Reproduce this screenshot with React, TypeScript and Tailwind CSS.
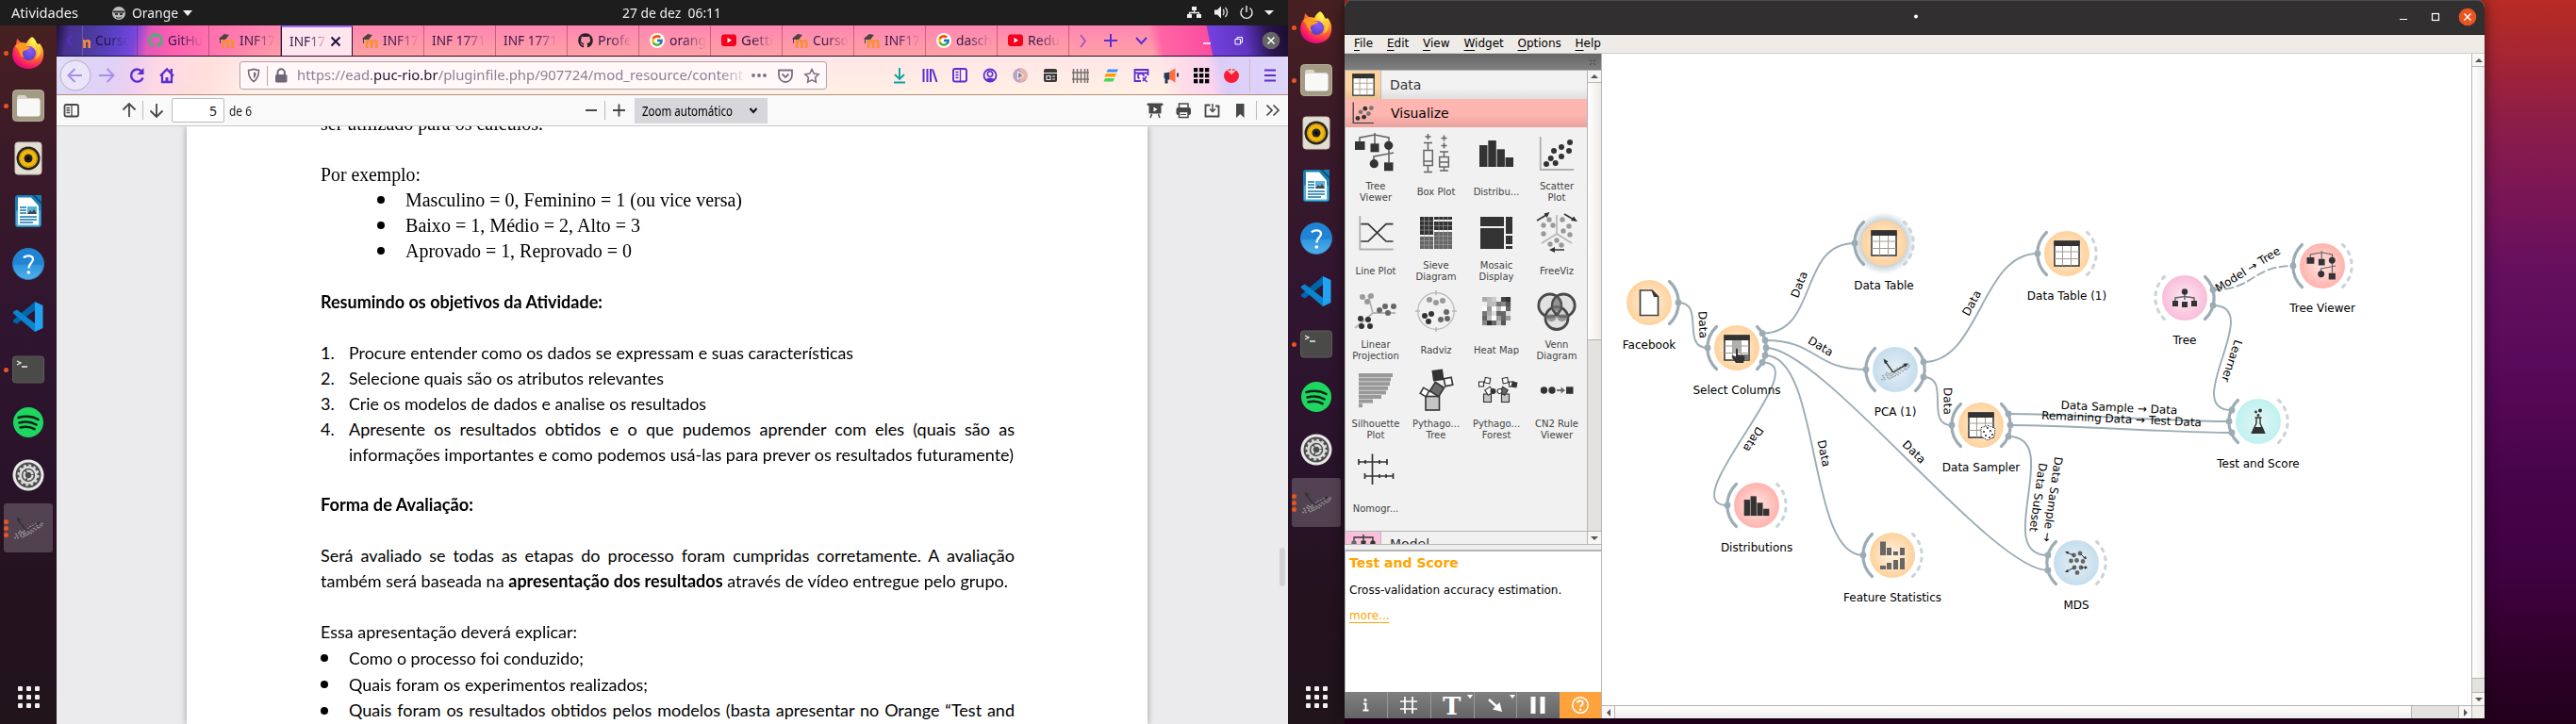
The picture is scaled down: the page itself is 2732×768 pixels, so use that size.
import React, { useLayoutEffect, useRef, useState } from "react";
import { FcGoogle } from "react-icons/fc";
import { FaGithub } from "react-icons/fa";

/* ---------- text helpers ---------- */

function Fit({ w, words, children, className = "" }: { w: number; words?: boolean; children: React.ReactNode; className?: string }) {
  const ref = useRef<HTMLSpanElement>(null);
  const [st, setSt] = useState<React.CSSProperties>({});
  useLayoutEffect(() => {
    const el = ref.current;
    if (!el) return;
    const nat = el.getBoundingClientRect().width;
    if (words) {
      const n = (el.textContent || "").split(" ").length - 1;
      setSt({ wordSpacing: `${(w - nat) / n}px` });
    } else setSt({ transform: `scaleX(${w / nat})` });
  }, []);
  return (
    <span className={"inline-block whitespace-nowrap " + className} style={{ width: w }}>
      <span ref={ref} className="inline-block origin-left whitespace-nowrap" style={st}>{children}</span>
    </span>
  );
}

/* ---------- dock ---------- */

const FirefoxIcon = () => (
  <svg width="36" height="36" viewBox="0 0 36 36">
    <defs>
      <radialGradient id="ffb" cx="0.75" cy="0.12" r="1">
        <stop offset="0.1" stopColor="#fff44f" /><stop offset="0.35" stopColor="#ffb02e" /><stop offset="0.6" stopColor="#ff5a36" /><stop offset="0.85" stopColor="#f5156c" /><stop offset="1" stopColor="#d0058a" />
      </radialGradient>
      <radialGradient id="ffg" cx="0.6" cy="0.3" r="0.8"><stop offset="0" stopColor="#9059ff" /><stop offset="1" stopColor="#4a3cc0" /></radialGradient>
    </defs>
    <path d="M22 1c3 2 4 4 5 7l2 1 1-1c3 4 5 8 4 14-1 8-8 13-16 13S2 30 1 21c0-5 1-9 4-12l1-6 4 4c2 0 4 0 6 1 1-3 3-5 6-7z" fill="url(#ffb)" />
    <circle cx="18.500" cy="18.500" r="7.500" fill="url(#ffg)" />
    <path d="M4 11c3-4 8-4 12-1-1 1 1 2 4 2-1 3-5 3-7 4-2 2-1 5 1 7-6-1-5-9-10-12z" fill="#ff9a1f" />
    <path d="M24 8c5 5 5 13 1 17 8-3 8-14-1-17z" fill="#ffcb3a" />
  </svg>
);
const FilesIcon = () => (
  <svg width="34" height="34" viewBox="0 0 34 34">
    <rect x="0.500" y="0.500" width="33" height="33" rx="4" fill="#a39b84" stroke="#b5ae9b" />
    <path d="M5 25V9c0-2 1-3 2-3h7l2 3h11c1.500 0 2.500 1 2.500 2v14c0 2-1 3-3 3H8c-2 0-3-1-3-3z" fill="#d9d6cc" />
    <rect x="5" y="10" width="24.500" height="18.500" rx="2.500" fill="#f8f8f6" />
  </svg>
);
const MusicIcon = () => (
  <svg width="34" height="36" viewBox="0 0 34 36">
    <rect x="3" y="1" width="28" height="34" rx="3" fill="#e3ded2" stroke="#cfc9bb" />
    <circle cx="17" cy="18" r="12.500" fill="#26241f" /><circle cx="17" cy="18" r="10" fill="#f2b90d" />
    <circle cx="17" cy="18" r="9" fill="none" stroke="#c9950c" /><circle cx="17" cy="18" r="4.500" fill="#222" /><circle cx="17" cy="18" r="1.500" fill="#000" />
  </svg>
);
const WriterIcon = () => (
  <svg width="34" height="36" viewBox="0 0 34 36">
    <rect x="3" y="1" width="28" height="34" rx="3" fill="#1781b5" />
    <rect x="4" y="17" width="26" height="17" rx="2" fill="#4aaed8" />
    <path d="M6 3.500h14l8 9v20H6z" fill="#fff" />
    <path d="M21 1h10v10z" fill="#0d4f77" /><path d="M24 1h7v7z" fill="#1781b5" />
    <path d="M8 14h7M8 17h7M8 20h7M8 24h18M8 27h18M8 30h14" stroke="#1477a8" strokeWidth="1.300" />
    <rect x="16" y="13" width="10" height="8" fill="#57b1dd" /><path d="M16 21l3-4 2 2 2-3 3 5z" fill="#444" />
  </svg>
);
const HelpIcon = () => (
  <svg width="34" height="34" viewBox="0 0 34 34">
    <defs><linearGradient id="hlp" x2="0" y2="1"><stop offset="0.5" stopColor="#1f84d6" /><stop offset="0.55" stopColor="#3296e0" /><stop offset="1" stopColor="#4fb0ea" /></linearGradient></defs>
    <circle cx="17" cy="17" r="16.500" fill="url(#hlp)" stroke="#2f7fc0" />
    <path d="M12 10.500c2-3 10-3 10 1.500 0 4-4.500 4-4.500 9.500" fill="none" stroke="#fff" strokeWidth="2.300" /><circle cx="17.300" cy="26" r="1.800" fill="#fff" />
  </svg>
);
const CodeIcon = () => (
  <svg width="34" height="34" viewBox="0 0 34 34">
    <path d="M24 1v9L5 24.500 1 22.500v-2z" fill="#0065a9" /><path d="M24 33v-9L5 9.500 1 11.500v2z" fill="#0a84cc" /><path d="M24 1l8.500 4v24L24 33z" fill="#22a3f2" />
  </svg>
);
const TermIcon = () => (
  <svg width="34" height="30" viewBox="0 0 34 30">
    <rect x="0.500" y="1" width="33" height="28" rx="3" fill="#4a4a48" stroke="#5c5c5a" />
    <path d="M5 6l4 2-4 2M10 12h6" fill="none" stroke="#eee" strokeWidth="1.300" />
  </svg>
);
const SpotifyIcon = () => (
  <svg width="34" height="34" viewBox="0 0 34 34">
    <circle cx="17" cy="17" r="16" fill="#1ed760" />
    <path d="M6.500 12c7-2 15-1.500 21 2M7.500 17.500c6-1.600 13-1 18 2M8.500 22.500c5-1.300 11-.8 15 1.700" fill="none" stroke="#12221a" strokeWidth="2.600" strokeLinecap="round" />
  </svg>
);
const GearIcon = () => (
  <svg width="34" height="34" viewBox="0 0 34 34">
    <circle cx="17" cy="17" r="16.500" fill="#e9e9e9" /><circle cx="17" cy="17" r="13.500" fill="#4c4c4c" />
    <circle cx="17" cy="17" r="10.500" fill="none" stroke="#ddd" strokeWidth="2.200" strokeDasharray="2.750 2.750" />
    <circle cx="17" cy="17" r="8.500" fill="none" stroke="#ddd" strokeWidth="2.600" />
    <circle cx="17" cy="17" r="4.500" fill="none" stroke="#ddd" strokeWidth="2.400" strokeDasharray="8 1.400" />
  </svg>
);
const CLOUD = [[-12, 8], [-10, 5], [-8, 8], [-7, 4], [-5, 6], [-4, 2], [-3, 5], [-1, 3], [0, 0], [1, 4], [3, 2], [4, -1], [5, 3], [6, 0], [8, 1], [9, -3], [10, -1], [12, -4], [14, -3], [-11, 10], [-6, 9], [-2, 7], [7, -3], [11, -6], [13, -6], [15, -5], [2, -2], [-9, 3], [-14, 10], [-13, 6], [-8, 6], [-5, 4], [-4, 8], [0, 6], [3, 5], [5, -3], [8, -5], [12, -1]];
const PcaGlyph = ({ cloud = "#8e979c" }: { cloud?: string }) => (
  <g>
    {CLOUD.map(([x, y], i) => <rect key={i} x={x - 0.7} y={y - 0.2} width="1.500" height="1.500" fill={cloud} />)}
    <path d="M-2 3L-11-9M-2 3L11-5" stroke="#333" strokeWidth="1.300" /><path d="M-12.500-11.500l5 3-3.600 2.600zM14-6.500l-5.500.300 2 3.700z" fill="#333" />
  </g>
);
const OrangeDockIcon = () => <svg width="34" height="34" viewBox="-17 -17 34 34"><PcaGlyph cloud="#a5a0a3" /></svg>;

const DOCK = [
  { I: FirefoxIcon, dots: 1 }, { I: FilesIcon, dots: 1 }, { I: MusicIcon, dots: 0 }, { I: WriterIcon, dots: 0 }, { I: HelpIcon, dots: 0 },
  { I: CodeIcon, dots: 0 }, { I: TermIcon, dots: 1 }, { I: SpotifyIcon, dots: 0 }, { I: GearIcon, dots: 0 }, { I: OrangeDockIcon, dots: 3 },
];

function Dock() {
  return (
    <div className="flex w-[60px] shrink-0 flex-col bg-[linear-gradient(#472021_0%,#3b1a28_18%,#301530_42%,#29132a_65%,#23121d_85%,#20141a_100%)] pt-[1px]">
      {DOCK.map(({ I, dots }, i) => (
        <div key={i} className="flex h-[56px] items-center">
          <div className="flex w-[6px] flex-col items-end gap-[2px]">
            {Array.from({ length: dots }, (_, k) => <div key={k} className="relative left-[3px] z-10 size-[5px] rounded-full bg-[#e95420]" />)}
          </div>
          <div className={"-ml-[2px] flex size-[52px] items-center justify-center rounded-[3px] " + (i === 9 ? "bg-white/20" : "")}><I /></div>
        </div>
      ))}
      <div className="mt-auto mb-[17px] grid w-[23px] grid-cols-3 gap-[4px] self-center">
        {Array.from({ length: 9 }, (_, k) => <div key={k} className="size-[5px] rounded-[1px] bg-[#efefef]" />)}
      </div>
    </div>
  );
}

/* ---------- browser ---------- */

const Moodle = () => (
  <svg width="17" height="17" viewBox="0 0 17 17">
    <text x="3" y="15.500" fontFamily="Noto Sans, sans-serif" fontWeight="800" fontSize="15" fill="#f7902f">m</text>
    <path d="M0 6l6-5 5 1-4 5-5 0z" fill="#4b4340" /><path d="M1.500 6v5" stroke="#4b4340" />
  </svg>
);
const Youtube = () => <svg width="16" height="16" viewBox="0 0 16 16"><rect y="1.500" width="16" height="12.500" rx="3" fill="#f5001d" /><path d="M6.500 5v5.500L11 7.800z" fill="#fff" /></svg>;
const Google = () => <div className="flex size-[16px] items-center justify-center rounded-full bg-white"><FcGoogle size={14} /></div>;

const TABS: { t: string; i: string; w: number; on?: boolean }[] = [
  { t: "GitHu", i: "gg", w: 37 }, { t: "INF17", i: "m", w: 38 }, { t: "INF17", i: "", w: 38, on: true }, { t: "INF17", i: "m", w: 38 }, { t: "INF 1771", i: "", w: 57 }, { t: "INF 1771", i: "", w: 57 },
  { t: "Profe", i: "gh", w: 36 }, { t: "orang", i: "g", w: 39 }, { t: "Getti", i: "y", w: 34 }, { t: "Curso", i: "m", w: 38 }, { t: "INF17", i: "m", w: 38 }, { t: "dasch", i: "g", w: 38 }, { t: "Redu", i: "y", w: 34 },
];
const tabIcon = (i: string) =>
  i === "m" ? <Moodle /> : i === "g" ? <Google /> : i === "y" ? <Youtube /> : i === "gh" ? <FaGithub size={16} color="#24222c" /> : <FaGithub size={16} color="#4fae7d" />;

function Tabs() {
  return (
    <div className="flex h-[33px] items-stretch border-b border-[#1d1038] bg-[linear-gradient(101deg,#1d1038_0px,#4a3192_14px,#4a3a9c_36px,#5f41cc_66px,#7a46dc_84px,#e455b8_98px,#ff5fae_125px,#ff70ae_160px,transparent_240px),linear-gradient(78deg,transparent_1138px,#ff66a5_1149px,#fb4d9f_1199px,#7440dd_1200px,#5f35c4_1236px,#4d2ba0_1244px,#2b1450_1262px,#1d0f33_1280px),linear-gradient(#ff86b2,#ffa1a4)] font-['Noto_Sans',sans-serif] text-[14.500px] text-[#3b1a4a]">
      <div className="flex w-[28px] items-center justify-center border-r border-[#6d58b0]"><svg width="8" height="12" viewBox="0 0 8 12"><path d="M6 1L2 6l4 5" fill="none" stroke="#5a2fd0" strokeWidth="1.800" /></svg></div>
      <div className="flex w-[58px] items-center border-r border-black/20 text-[#1f1140]">
        <div className="mr-[5px] flex w-[8px] shrink-0 justify-end overflow-hidden"><div className="w-[17px] shrink-0"><Moodle /></div></div>
        <span className="whitespace-nowrap [mask-image:linear-gradient(to_right,#000_30%,transparent_95%)]"><Fit w={38}>Curso</Fit></span>
      </div>
      {TABS.map((t, k) => (
        <div key={k} className={"flex w-[76px] shrink-0 items-center " + (t.on ? "border-x border-[#1d1038] border-t-[2px] border-t-[#a26bff] bg-[#ffe6ee]" : "border-r border-[#6b2448]/40")}>
          {t.i ? <div className="ml-[10px] mr-[5px] flex w-[17px] shrink-0 justify-center">{tabIcon(t.i)}</div> : <div className="w-[8px] shrink-0" />}
          <span className={"whitespace-nowrap " + (t.on ? "[mask-image:linear-gradient(to_right,#000_50%,rgba(0,0,0,0.15))]" : t.i ? "[mask-image:linear-gradient(to_right,#000_35%,transparent)]" : "[mask-image:linear-gradient(to_right,#000_60%,transparent)]")}><Fit w={t.w}>{t.t}</Fit></span>
          {t.on && <svg width="19" height="12" viewBox="-5 0 19 12"><path d="M1.500 1.500l9 9M10.500 1.500l-9 9" stroke="#1f1140" strokeWidth="2" /></svg>}
        </div>
      ))}
      <div className="flex items-center">
        <svg width="232" height="32" viewBox="1134 28 232 32" fill="none">
          <path d="M1146 38l5 6.500-5 6.500" stroke="#a54fc4" strokeWidth="1.800" />
          <path d="M1171 44h14M1178 37v14M1205 41l5.500 6 5.500-6" stroke="#5a2fd0" strokeWidth="2" />
          <path d="M1276 47h8" stroke="#fff" strokeWidth="1.500" />
          <path d="M1310 42.500h5.500v5.500h-5.500zM1312 42.500v-2h5.500v5.500h-2" stroke="#fff" />
          <circle cx="1348" cy="44" r="9.300" fill="#666" /><path d="M1344.500 40.500l7 7M1351.500 40.500l-7 7" stroke="#fff" strokeWidth="1.500" />
        </svg>
      </div>
    </div>
  );
}

function NavBar() {
  return (
    <div className="flex h-[41px] items-center border-b border-[#b58d78] bg-[linear-gradient(104deg,#e3dff8_0px,#dcd6f8_20px,#e0d2f6_60px,#f0cfee_85px,#ffd9e4_110px,#ffdfdc_160px,transparent_200px),linear-gradient(76deg,transparent_1142px,#ffdde8_1160px,#fbd3ee_1192px,#dccdf8_1205px,#dfd6fa_1275px),linear-gradient(#ffe6e8,#fff0e4)]">
      <svg width="194" height="40" viewBox="60 60 194 40" fill="none">
        <circle cx="80" cy="80" r="16" fill="#efe9fa" fillOpacity="0.800" stroke="#b6aec6" />
        <path d="M87 80H73M79.500 73l-7 7 7 7" stroke="#a78ee6" strokeWidth="2" />
        <path d="M105 80h15M113.500 73l7 7-7 7" stroke="#a78ee6" strokeWidth="2" />
        <path d="M151 76.500a6.500 6.500 0 1 0 .6 6" stroke="#5a2fd0" strokeWidth="2.400" /><path d="M152.500 72v7h-7z" fill="#5a2fd0" />
        <path d="M170 80.500l7-7 7 7M172 79v8h10v-8" stroke="#5a2fd0" strokeWidth="2.300" /><path d="M175.500 82h3v5h-3z" fill="#5a2fd0" /><path d="M180.500 73h2.500v4h-2.500z" fill="#5a2fd0" />
      </svg>
      <div className="flex h-[30px] w-[623px] items-center rounded-[3px] border border-[#b0a0b2] bg-[#fffafa]/90">
        <svg width="60" height="28" viewBox="255 66 60 28" fill="none">
          <path d="M263.500 74.500c2.500 0 4-.5 5.500-1.200 1.500.7 3 1.200 5.500 1.200 0 6-1.500 9.500-5.500 12-4-2.500-5.500-6-5.500-12z" stroke="#6f6678" strokeWidth="1.500" /><path d="M269 76.500v7c1.800-1.500 2.500-3.500 2.500-6.200z" fill="#6f6678" />
          <path d="M283.500 70v21" stroke="#b5a9b6" />
          <rect x="292" y="79" width="12.500" height="8.500" rx="1.500" fill="#6f6678" /><path d="M294.500 80v-3a3.700 3.700 0 0 1 7.400 0v3" stroke="#6f6678" strokeWidth="2" />
        </svg>
        <div className="h-[24px] w-[478px] font-['Noto_Sans',sans-serif] text-[15px] leading-[23px] text-[#8b8094] [mask-image:linear-gradient(to_right,#000_94%,transparent)]">
          <Fit w={473}>https://ead.<span className="text-[#1f1030]">puc-rio.br</span>/pluginfile.php/907724/mod_resource/content</Fit>
        </div>
        <svg width="80" height="28" viewBox="794 66 80 28" fill="none">
          <circle cx="800" cy="80" r="1.900" fill="#7a6f85" /><circle cx="806" cy="80" r="1.900" fill="#7a6f85" /><circle cx="812" cy="80" r="1.900" fill="#7a6f85" />
          <path d="M827 74.500h14v5c0 4-3 7.500-7 7.500s-7-3.500-7-7.500z" stroke="#7a6f85" strokeWidth="1.800" /><path d="M830.500 78.500l3.500 3.500 3.500-3.500" stroke="#7a6f85" strokeWidth="1.800" />
          <path d="M862 73.500l2.200 4.500 4.900.7-3.500 3.500.8 4.900-4.400-2.300-4.400 2.300.8-4.900-3.500-3.500 4.900-.7z" stroke="#7a6f85" strokeWidth="1.600" />
        </svg>
      </div>
      <svg width="489" height="40" viewBox="877 60 489 40" fill="none">
        <path d="M954 72v12M949 79l5 5 5-5M948 87.500h12" stroke="#0ba3a6" strokeWidth="1.900" />
        <path d="M979.500 73v14M983.500 73v14M987 73v14M989 73.500l4.500 13.500" stroke="#5a2fd0" strokeWidth="2" />
        <rect x="1011" y="73" width="14" height="13.500" rx="2" stroke="#5a2fd0" strokeWidth="1.900" /><path d="M1018.500 73v13M1013.500 76.500h3M1013.500 79.500h3M1013.500 82.500h3" stroke="#5a2fd0" strokeWidth="1.300" />
        <circle cx="1050" cy="80" r="6.500" stroke="#5a2fd0" strokeWidth="1.800" /><circle cx="1050" cy="78.500" r="2.700" stroke="#5a2fd0" strokeWidth="1.600" /><path d="M1045.500 84c3-2 6-2 9 0l-2 2.500h-5z" fill="#5a2fd0" />
        <circle cx="1082" cy="80" r="7.800" fill="#b9a3c0" /><path d="M1082 72.200a7.800 7.800 0 0 1 7 11l-7 4.600z" fill="#e9b7a9" /><path d="M1079.500 76v8l6-4z" fill="#8b7a98" stroke="#fff" />
        <rect x="1107" y="73" width="14" height="14" rx="2" fill="#3a3638" /><path d="M1107 77.500h14M1110 80.500h4v4h-4zM1116 81h3M1116 84h3" stroke="#eee" strokeWidth="1.100" />
        <path d="M1138.500 73v15M1142.500 73v15M1146.500 73v15M1150.500 73v15M1153.500 73v15M1137 77h18M1137 84h18" stroke="#77716f" strokeWidth="1.500" />
        <path d="M1175 73.500h11l-1.500 3h-11z" fill="#3f8cff" /><path d="M1173 78h11l-1.500 3.500h-11z" fill="#ff9a00" /><path d="M1172 83h10l-1.500 3.500h-10z" fill="#48d65c" />
        <path d="M1210 86h-6.500V74h14v6M1203.500 77.500h14" stroke="#5a2fd0" strokeWidth="1.800" /><path d="M1208.500 83.500a3 3 0 1 1 4.500-2.500M1212 82.500l4.500 4.500M1212 86l4-5" stroke="#5a2fd0" strokeWidth="1.700" />
        <path d="M1234.500 77.500l6-1v8h-2v4h-3v-5l-1-1z" fill="#243b55" /><path d="M1240.500 76l6-3.500v15l-6-3.500z" fill="#ff6b3d" /><path d="M1248 77.500h2v4h-2z" fill="#243b55" />
        {[0, 1, 2].map((r) => [0, 1, 2].map((c) => <rect key={`${r}${c}`} x={1266 + c * 6} y={72 + r * 6} width="4.300" height="4.300" fill="#000" />))}
        <ellipse cx="1306" cy="80.500" rx="8" ry="7.500" fill="#f81d36" /><path d="M1301 74l4 1 1-3 1.500 3 4-1-3 3-2.500 2-2-2z" fill="#ffc9c0" />
        <path d="M1325.500 63v34" stroke="#c9b9c9" />
        <path d="M1341 74.500h12M1341 80h12M1341 85.500h12" stroke="#5a2fd0" strokeWidth="2" />
      </svg>
    </div>
  );
}

function PdfBar() {
  return (
    <div className="flex h-[33px] items-center border-b border-[#c8c8c8] bg-[#f9f9fa] font-['Noto_Sans',sans-serif] text-[14px] text-[#1b1b1b]">
      <svg width="122" height="32" viewBox="60 101 122 32" fill="none" stroke="#484848">
        <rect x="68.500" y="111" width="14.500" height="12.500" rx="2" strokeWidth="1.800" /><path d="M76 111v12M70.500 114.500h3.500M70.500 117h3.500M70.500 119.500h3.500" strokeWidth="1.300" />
        <path d="M137 124v-14M130.500 116.500l6.500-6.500 6.500 6.500" strokeWidth="1.800" /><path d="M151.500 107v20" stroke="#bbb" /><path d="M166 110v14M159.500 117.500l6.500 6.500 6.500-6.500" strokeWidth="1.800" />
      </svg>
      <div className="flex h-[26px] w-[56px] items-center justify-end rounded-[2px] border border-[#bbb] bg-white pr-[7px]">5</div>
      <div className="ml-[5px] w-[364px]"><Fit w={24}>de 6</Fit></div>
      <svg width="66" height="32" viewBox="607 101 66 32" fill="none" stroke="#484848"><path d="M621 117h12M650 117h13M656.500 110.500v13" strokeWidth="1.900" /><path d="M641.500 107v20" stroke="#bbb" /></svg>
      <div className="flex h-[27px] w-[141px] items-center bg-[#d7d7db] pl-[8px]">
        <Fit w={96} className="text-black">Zoom automático</Fit>
        <svg className="ml-[17px]" width="10" height="8" viewBox="0 0 10 8"><path d="M1.500 2L5 6l3.500-4" fill="none" stroke="#111" strokeWidth="2" /></svg>
      </div>
      <svg className="ml-auto" width="160" height="32" viewBox="1206 101 160 32" fill="none" stroke="#484848">
        <path d="M1217 110h16v1.500h-16zM1219 112h12v8h-12z" fill="#484848" strokeWidth="1" /><path d="M1223.500 113.500v5l4-2.500z" fill="#fff" stroke="none" /><path d="M1221.500 121l-1.500 4M1228.500 121l1.500 4" strokeWidth="1.500" />
        <path d="M1250.500 114v-4h9.500v4" strokeWidth="1.500" /><rect x="1247.500" y="114" width="15.500" height="8" rx="2" fill="#484848" stroke="none" /><path d="M1250.500 118.500h9.500v6h-9.500z" fill="#fff" strokeWidth="1.500" /><path d="M1252 121.500h6" />
        <path d="M1289 112.500h3.500v11h-14v-12h5" strokeWidth="1.800" /><path d="M1286 110v8M1283 115.500l3 3 3-3" strokeWidth="1.500" />
        <path d="M1311 110h8.500v15l-4.200-4-4.300 4z" fill="#484848" stroke="none" />
        <path d="M1332.500 107v20" stroke="#bbb" /><path d="M1343.500 111.500l5.500 5.500-5.500 5.500M1350.500 111.500l5.500 5.500-5.500 5.500" strokeWidth="1.700" />
      </svg>
    </div>
  );
}

const Line = ({ children, cls = "" }: { children?: React.ReactNode; cls?: string }) => <div className={"flex h-[26.900px] shrink-0 items-center whitespace-nowrap " + cls}>{children}</div>;
const Bullet = ({ cls }: { cls: string }) => <div className={"flex items-center " + cls}><div className="size-[8px] rounded-full bg-black" /></div>;

function PdfPage() {
  const ser = "pb-[2px] font-['Liberation_Serif',serif] text-[20px]";
  return (
    <div className="relative flex flex-1 overflow-hidden bg-[#ebebed]">
      <div className="ml-[138px] w-[1019px] overflow-hidden bg-white pl-[142px] font-['Lato',sans-serif] text-[18px] text-black shadow-[0_0_7px_rgba(0,0,0,0.35)]">
        <div className="-mt-[15px] flex flex-col">
          <Line cls={ser}><Fit w={236}>ser utilizado para os cálculos.</Fit></Line>
          <Line />
          <Line cls={ser}><Fit w={106}>Por exemplo:</Fit></Line>
          <Line cls={ser}><Bullet cls="ml-[60px] w-[30px]" /><Fit w={357}>Masculino = 0, Feminino = 1 (ou vice versa)</Fit></Line>
          <Line cls={ser}><Bullet cls="ml-[60px] w-[30px]" /><Fit w={249}>Baixo = 1, Médio = 2, Alto = 3</Fit></Line>
          <Line cls={ser}><Bullet cls="ml-[60px] w-[30px]" /><Fit w={240}>Aprovado = 1, Reprovado = 0</Fit></Line>
          <Line />
          <Line cls="font-bold"><Fit w={299}>Resumindo os objetivos da Atividade:</Fit></Line>
          <Line />
          <Line><span className="w-[30px]">1.</span><Fit w={535}>Procure entender como os dados se expressam e suas características</Fit></Line>
          <Line><span className="w-[30px]">2.</span><Fit w={334}>Selecione quais são os atributos relevantes</Fit></Line>
          <Line><span className="w-[30px]">3.</span><Fit w={379}>Crie os modelos de dados e analise os resultados</Fit></Line>
          <Line><span className="w-[30px]">4.</span><Fit w={706} words>Apresente os resultados obtidos e o que pudemos aprender com eles (quais são as</Fit></Line>
          <Line><span className="w-[30px]" /><Fit w={705}>informações importantes e como podemos usá-las para prever os resultados futuramente)</Fit></Line>
          <Line />
          <Line cls="font-bold"><Fit w={162}>Forma de Avaliação:</Fit></Line>
          <Line />
          <Line><Fit w={736} words>Será avaliado se todas as etapas do processo foram cumpridas corretamente. A avaliação</Fit></Line>
          <Line><Fit w={729}>também será baseada na <b>apresentação dos resultados</b> através de vídeo entregue pelo grupo.</Fit></Line>
          <Line />
          <Line><Fit w={272}>Essa apresentação deverá explicar:</Fit></Line>
          <Line cls="mt-[1px]"><Bullet cls="w-[30px]" /><Fit w={249}>Como o processo foi conduzido;</Fit></Line>
          <Line cls="mt-[1px]"><Bullet cls="w-[30px]" /><Fit w={317}>Quais foram os experimentos realizados;</Fit></Line>
          <Line cls="mt-[1px]"><Bullet cls="w-[30px]" /><Fit w={706} words>Quais foram os resultados obtidos pelos modelos (basta apresentar no Orange “Test and</Fit></Line>
        </div>
      </div>
      <div className="ml-auto mr-[3px] mt-[447px] h-[41px] w-[6px] rounded-[3px] bg-[#d3d3d5]" />
    </div>
  );
}

function TopBar() {
  return (
    <div className="flex h-[27px] shrink-0 items-center bg-[#1d1d1d] font-['Noto_Sans',sans-serif] text-[15px] text-[#efefef]">
      <div className="w-[119px] pl-[12px]"><Fit w={71}>Atividades</Fit></div>
      <svg width="21" height="16" viewBox="0 0 21 16"><circle cx="7" cy="8" r="7" fill="#bdbdbd" /><path d="M1 6.500h12M3 9h3M8 9h3" stroke="#333" strokeWidth="1.800" /><path d="M4 12c2 1.500 4 1.500 6 0" fill="none" stroke="#333" /></svg>
      <Fit w={49}>Orange</Fit>
      <svg className="ml-[5px]" width="10" height="8" viewBox="0 0 10 8"><path d="M0 1h10L5 7z" fill="#efefef" /></svg>
      <div className="ml-[456px] whitespace-pre"><Fit w={105} className="whitespace-pre"><span className="whitespace-pre">27 de dez  06:11</span></Fit></div>
      <svg className="ml-auto" width="110" height="27" viewBox="1256 0 110 27" fill="none">
        <path d="M1264 7h5v4h-5zM1259 15h5v4h-5zM1269 15h5v4h-5z" fill="#efefef" /><path d="M1266.500 11v3M1261.500 15v-1.500h10V15" stroke="#efefef" strokeWidth="1.300" />
        <path d="M1288 10.500h3l4-4v13l-4-4h-3z" fill="#efefef" /><path d="M1297 10c1.500 2 1.500 4 0 6M1299.500 8c2.500 3 2.500 7 0 10" stroke="#ddd" strokeWidth="1.300" />
        <path d="M1318.500 8.500a6 6 0 1 0 7 0M1322 6v7" stroke="#efefef" strokeWidth="1.400" />
        <path d="M1341 11h10l-5 5z" fill="#efefef" />
      </svg>
    </div>
  );
}

/* ---------- widget glyphs ---------- */

const dk = "#333", md = "#666", lt = "#999";
const Dots = ({ p, f = dk, r = 3 }: { p: number[][]; f?: string; r?: number }) => <>{p.map(([x, y], i) => <circle key={i} cx={x} cy={y} r={r} fill={f} />)}</>;

const TreeViewerGlyph = () => (
  <g>
    <path d="M-1-21v12M-17-12v-4L-1-19l15 3v4M14-4v14M-2 8v-4l16-3 5-1" fill="none" stroke={md} strokeWidth="1.600" />
    <rect x="-22" y="-12" width="10.500" height="9" fill={dk} /><rect x="-5.500" y="-9.700" width="9" height="9" fill={dk} /><rect x="9" y="10.300" width="9.500" height="9" fill={dk} />
    <Dots p={[[13.700, -7.700], [-1.700, 11.700]]} r={4.600} />
  </g>
);
const BoxPlotGlyph = () => (
  <g fill="none" stroke={md} strokeWidth="1.500">
    <path d="M-8.500-10.500v8M-8.500 14v6.500M-13-10.500h9M-13 20.500h9M-13 9h9M-8.500-20v6M-11.500-17h6" /><rect x="-13" y="-2.500" width="9.300" height="16" />
    <path d="M8.500-1v6M8.500 15v4M4-1h9M4 19h9M4 10h9M8.500-18.500v6M5.500-15.500h6M8.500-10.500v6M5.500-7.500h6" /><rect x="3.700" y="4.500" width="9.600" height="10.500" />
  </g>
);
const DistGlyph = () => <g fill={dk}><rect x="-18" y="-8" width="8.500" height="23" /><rect x="-8.700" y="-13" width="8.500" height="28" /><rect x="0.600" y="-3.700" width="8.300" height="18.700" /><rect x="9.600" y="5" width="8.400" height="10" /></g>;
const ScatterGlyph = () => <g><path d="M-17.300-17v35H18" fill="none" stroke="#b0b0b0" strokeWidth="1.800" /><Dots p={[[-11, 12], [-6.300, 6], [-1.300, 11], [-3, -2], [5, -6], [5, 4], [14, -11], [13, -2]]} /></g>;
const LineGlyph = () => <g fill="none"><path d="M-16.700-17v35.500H18.700" stroke="#b0b0b0" strokeWidth="1.800" /><path d="M-15.700-8.300H-8L11 10h7.500M-15.700 10H-8L11-8.300h7.500" stroke={dk} strokeWidth="1.700" /></g>;
const SieveGlyph = () => (
  <g>
    <path d="M-17-16h14v19h-14zM-2-16h19v3h-19zM-2-11h19v9h-19z" fill={dk} /><path d="M-17 5h14v13h-14zM-2 0h19v18h-19z" fill={md} />
    <path d="M-12.500-16v34M-7.700-16v34M3-16v34M7.700-16v34M12.400-16v34M-17-11.500h14M-17-6.800h14M-17-2h14M-17 9.500h14M-17 14h14M-2-6.500h19M-2 4.500h19M-2 9h19M-2 13.500h19" stroke="#aaa" strokeWidth="0.600" />
  </g>
);
const MosaicGlyph = () => <path d="M-17-16H8v10h-25zM-17-4H8v22h-25zM10-16h7V2h-7zM10 4h7v9h-7zM10 15h7v3h-7z" fill={dk} />;
const FreeVizGlyph = () => (
  <g>
    <path d="M0-18V2L-16 12M0 2l16 10" fill="none" stroke="#b5b5b5" strokeWidth="1.600" />
    <Dots f={lt} r={2.700} p={[[-8, -13], [-14, -7], [-4, -7], [-14, 2], [-7, 13], [6, -13], [13, -6], [7, -1], [14, 3], [0, 9], [5, 14]]} />
    <path d="M-21-12l10-6M8-19l10 6M8 19H-4" stroke={dk} strokeWidth="1.600" /><path d="M-7.500-21l-3 6-3-4.500zM22-11l-7-1 3-4.500zM-8 19l6-3v6z" fill={dk} />
  </g>
);
const LinProjGlyph = () => (
  <g>
    <path d="M-3 2L-8-17M-3 2h24M-3 2l-19 16" stroke="#b5b5b5" strokeWidth="1.800" />
    <Dots f={lt} p={[[-14, -15], [-5, -16], [-9, -10]]} /><Dots f={md} p={[[4, -1], [10, -5], [19, -5], [13, 2]]} /><Dots p={[[-16, 8], [-8, 9], [-15, 16], [-6, 16]]} />
  </g>
);
const RadvizGlyph = () => (
  <g>
    <circle r="19.300" fill="none" stroke="#b5b5b5" strokeWidth="1.200" /><path d="M0-22v5M0 17v5M-22 0h5M17 0h5" stroke="#b5b5b5" strokeWidth="1.500" />
    <Dots f={lt} p={[[-7, -12], [0, -9], [7, -11]]} /><Dots p={[[-12, 5], [-5, 3], [-8, 11]]} /><Dots f={md} p={[[11, 1], [5, 9], [12, 8]]} />
  </g>
);
const HEAT = ["abce43", "ebb785", "f9fbf6", "7ad66d", "6bf969", "836b5e"];
const HeatGlyph = () => <g>{HEAT.map((row, r) => row.split("").map((c, k) => <rect key={`${r}${k}`} x={-15 + k * 5} y={-15 + r * 5} width="5.100" height="5.100" fill={`#${c}${c}${c}`} />))}</g>;
const VennGlyph = () => <g stroke="#4a4a4a" strokeWidth="2.800" fill="#777" fillOpacity="0.120"><circle cx="-7.200" cy="-6" r="12" /><circle cx="7.200" cy="-6" r="12" /><circle cx="0" cy="7.500" r="12" /><path d="M0-15c4 4 5 8 4 13-2 3-6 3-8 0-1-5 0-9 4-13zM-12 5c5-3 9-2 12 1-1 4-3 5-7 5-3-1-4-3-5-6zM12 5c-5-3-9-2-12 1 1 4 3 5 7 5 3-1 4-3 5-6z" stroke="none" fill="#777" fillOpacity="0.700" /></g>;
const SilGlyph = () => <g>{[36, 34, 33, 31, 29, 24, 15, 4].map((w, i) => <rect key={i} x="-18" y={-18 + i * 4.600} width={w} height="4" fill={lt} />)}</g>;
const PyTreeGlyph = () => (
  <g stroke={dk} strokeWidth="1.600">
    <rect x="-11" y="6.500" width="14.500" height="14.500" fill="#c4c4c4" /><rect x="-5.500" y="-5.500" width="11" height="11" fill="#6b6b6b" transform="translate(1 -1) rotate(32)" />
    <rect x="-3.500" y="-3.500" width="7" height="7" fill="#fff" transform="translate(-12 2) rotate(30)" /><rect x="-5" y="-5" width="10" height="10" fill={dk} transform="translate(2 -16) rotate(-8)" /><rect x="-4" y="-4" width="8" height="8" fill="#fff" transform="translate(13 -9) rotate(-12)" />
  </g>
);
const Mini = ({ c1, c2 }: { c1: string; c2: string }) => (
  <g stroke={dk} strokeWidth="1.100"><rect x="-4" y="4" width="8" height="8.500" fill="#c4c4c4" /><rect x="-3" y="-3" width="6.500" height="6.500" fill={c1} transform="rotate(-33 2 -2)" /><rect x="-9" y="-9" width="5" height="5" fill="#fff" /><rect x="-4.500" y="-13" width="5.500" height="5.500" fill="#fff" transform="rotate(10)" /><circle cx="6" cy="1" r="2.500" fill={c2} /></g>
);
const PyForestGlyph = () => <g><g transform="translate(-9.500 0)"><Mini c1="#fff" c2="#333" /></g><g transform="translate(9.500 0) scale(-1 1)"><Mini c1="#666" c2="#fff" /></g><rect x="16" y="-9" width="6" height="6" fill={dk} transform="rotate(12 19 -6)" /></g>;
const Cn2Glyph = () => <g><Dots p={[[-13.500, 0], [-5, 0]]} r={3.700} /><path d="M0 0h6" stroke={md} strokeWidth="1.800" /><path d="M4.500-3.500L9 0 4.500 3.500z" fill={md} /><rect x="10" y="-3.700" width="7.500" height="7.500" fill={dk} /></g>;
const NomoGlyph = () => <path d="M-3.500-16.500V16M-18-8h30M-11.500 7h30M-18-11v6M12-11v6M-11-10v4M4-10v4M-11.500 4v6M18.500 4v6M4 5v4M11 5v4" fill="none" stroke={dk} strokeWidth="1.700" />;

const TableGlyph = () => (
  <g><rect x="-13" y="-13" width="26" height="26" fill="#fff" stroke={dk} strokeWidth="1.500" /><path d="M-13-2h26M-13 5.500h26M-4.500-8v21M4.500-8v21" stroke="#a59a90" strokeWidth="1" /><rect x="-13.500" y="-13.500" width="27" height="5.500" fill={dk} /></g>
);
const FileGlyph = () => <g><path d="M-9.500-13H3l6.500 6.500V13.500h-19z" fill="#fff" stroke="#444" strokeWidth="1.700" /><path d="M2-14l8 8H5z" fill={dk} /></g>;
const SelectGlyph = () => <g><TableGlyph /><rect x="-4.500" y="-8" width="9" height="14" fill="#b0b0b0" /><rect x="5" y="7" width="7.500" height="6" fill="#777" /><path d="M-1 1c1-.8 2-.2 2 1v5l7 1.500c1 1 0 4-1 7.500H-1L-5 10c-1-2 1-2.500 4-.5z" fill={dk} /></g>;
const SamplerGlyph = () => <g><TableGlyph /><path d="M0 2.500l8-2 7 3-1 9-7 3.500-7-4z" fill="#fff" stroke={dk} strokeDasharray="1.500 1" /><Dots r={1.100} p={[[3, 7], [5, 11], [10, 6], [12, 10], [7, 3], [9, 13]]} /></g>;
const TreeGlyph = () => <g><path d="M0-6v8M-10 3v-3l10-1.500L10 0v3" fill="none" stroke={md} strokeWidth="1.500" /><circle cy="-6.500" r="3.200" fill={dk} /><path d="M-13 3h6v6h-6zM-3 4h6v6h-6zM7 3h6v6h-6z" fill={dk} /></g>;
const FeatGlyph = () => <path d="M-13-14.500h6v14.500h-6zM-6-8h5v8h-5zM1-4h5v4h-5zM8-8h5v8h-5zM-13 11h6v4h-6zM-6 8h5v7h-5zM1 5h5v10h-5zM8 3h5v12h-5z" fill={md} />;
const MdsGlyph = () => <g><Dots f={md} r={2.400} p={[[-2.500, -8], [4, -10], [-5.500, -2], [0.500, -2.500], [7, -1.500], [-2, 5], [5, 5], [1, 10.500]]} /><path d="M-3-8l-7-3M5-9l5 5M-2 5l-8 4M5 5h5" stroke={dk} /><path d="M-12-12l4 0-1 3zM11-4l-4-1 3-2zM-12 10l2.500-3 1.500 3zM12 5l-3-2v4z" fill={dk} /></g>;
const FlaskGlyph = () => <g><path d="M-3.500-4h7M-2-4V2L-6.500 12h13L2 2v-6" fill="none" stroke={dk} strokeWidth="1.400" /><path d="M-4.500 6h9l3 7h-15z" fill={dk} /><Dots r={1.400} p={[[-2.500, -10], [0, -6.500]]} /><circle cx="2" cy="-11.500" r="2" fill={dk} /></g>;

/* ---------- workflow canvas ---------- */

type N = { n: string; x: number; y: number; c: string; G: React.FC; l: number; r: number; s?: number };
const NODES: N[] = [
  { n: "Facebook", x: 1749, y: 321, c: "o", G: FileGlyph, l: 0, r: 1 },
  { n: "Select Columns", x: 1842, y: 369, c: "o", G: SelectGlyph, l: 1, r: 1 },
  { n: "Data Table", x: 1998, y: 258, c: "o", G: TableGlyph, l: 1, r: 2 },
  { n: "Data Table (1)", x: 2192, y: 269, c: "o", G: TableGlyph, l: 1, r: 2 },
  { n: "PCA (1)", x: 2010, y: 392, c: "b", G: PcaGlyph, l: 1, r: 1 },
  { n: "Data Sampler", x: 2101, y: 451, c: "o", G: SamplerGlyph, l: 1, r: 1 },
  { n: "Tree", x: 2317, y: 316, c: "p", G: TreeGlyph, l: 2, r: 1 },
  { n: "Tree Viewer", x: 2463, y: 282, c: "r", G: TreeViewerGlyph, l: 1, r: 2, s: 0.75 },
  { n: "Test and Score", x: 2395, y: 447, c: "t", G: FlaskGlyph, l: 1, r: 2 },
  { n: "Distributions", x: 1863, y: 536, c: "r", G: DistGlyph, l: 1, r: 2, s: 0.74 },
  { n: "Feature Statistics", x: 2007, y: 589, c: "o", G: FeatGlyph, l: 1, r: 2 },
  { n: "MDS", x: 2202, y: 597, c: "b", G: MdsGlyph, l: 1, r: 2 },
];
type L = { a: number[]; b: number[]; t: string[]; dash?: boolean };
const LINKS: L[] = [
  { a: [1780, 321], b: [1811, 369], t: ["Data"] },
  { a: [1869, 353.500], b: [1967, 258], t: ["Data"] },
  { a: [1872, 361], b: [1979, 392], t: ["Data"] },
  { a: [1873, 369], b: [2172, 605], t: ["Data"] },
  { a: [1872, 377], b: [1976, 589], t: ["Data"] },
  { a: [1869, 384.500], b: [1832, 536], t: ["Data"] },
  { a: [2040, 384], b: [2161, 269], t: ["Data"] },
  { a: [2040, 400], b: [2070, 451], t: ["Data"] },
  { a: [2130, 439], b: [2364, 447], t: ["Data Sample → Data"] },
  { a: [2132, 451], b: [2367, 459], t: ["Remaining Data → Test Data"] },
  { a: [2130, 463], b: [2172, 589], t: ["Data Subset", "Data Sample →"] },
  { a: [2347, 307.500], b: [2432, 282], t: ["Model → Tree"], dash: true },
  { a: [2347, 324], b: [2367, 435], t: ["Learner"] },
];
const GRAD: Record<string, [string, string]> = { o: ["#ffeeda", "#ffd39f"], b: ["#e0edf5", "#c7deed"], p: ["#fbe3ef", "#f9bfdb"], r: ["#ffdedb", "#ffb5b0"], t: ["#ddf5f5", "#c1f1f1"] };
const ARC = "M21.500-22.500A31 31 0 0 1 21.500 22.500";

function Workflow() {
  return (
    <svg width="922" height="691" viewBox="1699 57 922 691" fontFamily="DejaVu Sans, sans-serif" fontSize="12" textAnchor="middle" fill="#000">
      <defs>
        {Object.entries(GRAD).map(([k, [a, b]]) => <radialGradient key={k} id={`n-${k}`}><stop offset="0.15" stopColor={a} /><stop offset="0.95" stopColor={b} /></radialGradient>)}
        <radialGradient id="glow"><stop offset="0.72" stopColor="#8fa3ae" stopOpacity="0.500" /><stop offset="1" stopColor="#8fa3ae" stopOpacity="0" /></radialGradient>
      </defs>
      {LINKS.map(({ a, b, t, dash }, i) => {
        const dx = b[0] - a[0], dy = b[1] - a[1], h = Math.min(Math.hypot(dx, dy) / 2, 60);
        const ang = Math.atan2(dy * 2, dx * 2 - 2 * h), mx = (a[0] + b[0]) / 2, my = (a[1] + b[1]) / 2;
        return (
          <g key={i}>
            <path d={`M${a[0]} ${a[1]}C${a[0] + h} ${a[1]} ${b[0] - h} ${b[1]} ${b[0]} ${b[1]}`} fill="none" stroke="#9cacb4" strokeWidth="1.900" strokeDasharray={dash ? "10 2.500" : undefined} />
            <Dots p={[a, b]} f="#9cacb4" r={3.400} />
            <g transform={`translate(${mx} ${my}) rotate(${(ang * 180) / Math.PI})`}>
              {t.map((s, k) => <text key={k} y={-6.500 - k * 15.500}>{s}</text>)}
            </g>
          </g>
        );
      })}
      {NODES.map(({ n, x, y, c, G, l, r, s }) => (
        <g key={n} transform={`translate(${x} ${y})`}>
          {n === "Data Table" && <circle r="33" fill="url(#glow)" />}
          {[l, r].map((v, k) => v > 0 && <path key={k} d={ARC} transform={k === 0 ? "scale(-1 1)" : undefined} fill="none" stroke={v === 1 ? "#9cacb4" : "#ccd5d9"} strokeWidth="3.200" strokeLinecap="round" strokeDasharray={v === 2 ? "3 6.400" : undefined} />)}
          <circle r="24" fill={`url(#n-${c})`} />
          <g transform={`scale(${s || 1})`}><G /></g>
          <text y="48.500">{n}</text>
        </g>
      ))}
    </svg>
  );
}

/* ---------- Orange window ---------- */

const WIDGETS: { l: string[]; G: React.FC }[] = [
  { l: ["Tree", "Viewer"], G: TreeViewerGlyph }, { l: ["Box Plot"], G: BoxPlotGlyph }, { l: ["Distribu..."], G: DistGlyph }, { l: ["Scatter", "Plot"], G: ScatterGlyph },
  { l: ["Line Plot"], G: LineGlyph }, { l: ["Sieve", "Diagram"], G: SieveGlyph }, { l: ["Mosaic", "Display"], G: MosaicGlyph }, { l: ["FreeViz"], G: FreeVizGlyph },
  { l: ["Linear", "Projection"], G: LinProjGlyph }, { l: ["Radviz"], G: RadvizGlyph }, { l: ["Heat Map"], G: HeatGlyph }, { l: ["Venn", "Diagram"], G: VennGlyph },
  { l: ["Silhouette", "Plot"], G: SilGlyph }, { l: ["Pythago...", "Tree"], G: PyTreeGlyph }, { l: ["Pythago...", "Forest"], G: PyForestGlyph }, { l: ["CN2 Rule", "Viewer"], G: Cn2Glyph },
  { l: ["Nomogr..."], G: NomoGlyph },
];

const Arrow = ({ d }: { d: string }) => <svg width="8" height="8" viewBox="0 0 8 8"><path d={d} fill="#555" /></svg>;

function Panel() {
  return (
    <div className="flex w-[273px] shrink-0 flex-col border-r-[1.500px] border-[#b5b5b5]">
      <div className="flex h-[17px] shrink-0 items-center justify-end bg-[linear-gradient(#666,#808080)] pr-[5px]"><svg width="8" height="8" viewBox="0 0 8 8"><path d="M1 1l2 2M7 1L5 3M1 7l2-2M7 7L5 5" stroke="#555" strokeWidth="1.500" /></svg></div>
      <div className="flex h-[504px] shrink-0 border-y-[1.500px] border-l border-[#b5b5b5]">
        <div className="flex w-[256px] flex-col overflow-hidden bg-[#f1f1f1] text-[14px] text-[#333]">
          <div className="flex h-[30px] shrink-0 bg-[linear-gradient(#f2f2f2_60%,#dedede)]">
            <div className="flex w-[38px] items-center justify-center border-r border-[#bbb] bg-[linear-gradient(#ffd39f_60%,#eac190)]"><svg width="28" height="28" viewBox="-15 -15 30 30"><g transform="scale(0.92)"><TableGlyph /></g></svg></div>
            <span className="pl-[9px] leading-[30px]">Data</span>
          </div>
          <div className="flex h-[30px] shrink-0 bg-[linear-gradient(#ffb5b0_55%,#e8a39e)] text-black">
            <div className="flex w-[38px] items-center justify-center"><svg width="24" height="24" viewBox="-20 -19 40 40"><path d="M-18-18v36.500H18" fill="none" stroke={dk} strokeWidth="2" /><Dots r={4} p={[[-10, 10], [1, 8], [3, -7]]} /><Dots f="#777" r={4} p={[[-5, -1], [9, 2], [14, -8]]} /></svg></div>
            <span className="pl-[10px] leading-[30px]">Visualize</span>
          </div>
          <div className="grid h-[428px] shrink-0 grid-cols-4 content-start text-[10px] leading-[12px] text-[#444]">
            {WIDGETS.map(({ l, G }, i) => (
              <div key={i} className="flex h-[84px] flex-col items-center pt-[3px]">
                <svg className="shrink-0" width="48" height="48" viewBox="-24 -24 48 48"><G /></svg>
                <div className="flex h-[33px] flex-col items-center justify-center pt-[2px]">{l.map((s) => <span key={s}>{s}</span>)}</div>
              </div>
            ))}
          </div>
          <div className="flex h-[29px] shrink-0 border-t border-[#b5b5b5]">
            <div className="flex w-[38px] justify-center border-r border-[#bbb] bg-[#f9bfdb] pt-[3px]"><svg width="26" height="24" viewBox="0 0 26 24"><path d="M13 0v8M3 8V3h20v5" fill="none" stroke={dk} strokeWidth="1.300" /><circle cx="3" cy="9" r="2.700" fill={md} /><path d="M10.500 6.500h5v5h-5z" fill={dk} /><circle cx="23" cy="9" r="2.700" fill={dk} /></svg></div>
            <span className="pl-[9px] pt-[3px] leading-[20px]">Model</span>
          </div>
        </div>
        <div className="flex flex-1 flex-col items-center border-l border-[#b5b5b5] bg-[#e3e2df]">
          <div className="flex h-[13px] w-full items-center justify-center border-b border-[#b5b5b5] bg-[#f6f5f3]"><Arrow d="M0 6h8L4 2z" /></div>
          <div className="h-[273px] w-full border-b border-[#b5b5b5] bg-[linear-gradient(to_right,#fff,#edebe8)]" />
          <div className="mt-auto flex h-[14px] w-full items-center justify-center border-t border-[#b5b5b5] bg-[#f6f5f3]"><Arrow d="M0 2h8L4 6z" /></div>
        </div>
      </div>
      <div className="h-[5px] shrink-0 bg-[#efefef]" />
      <div className="flex flex-1 flex-col border-l border-t-[2px] border-[#b5b5b5] bg-white pl-[4px] text-[12px] text-black">
        <div className="pt-[3px] text-[14px] font-bold leading-[18px] text-[#ffa500]">Test and Score</div>
        <div className="mt-[12px] leading-[16px]">Cross-validation accuracy estimation.</div>
        <div className="mt-[11px] leading-[16px] text-[#ffa500] underline underline-offset-[3px]">more...</div>
      </div>
      <svg className="shrink-0" width="272" height="28" viewBox="1426 733 272 28" fill="none">
        <defs><linearGradient id="tb" x2="0" y2="1"><stop stopColor="#808080" /><stop offset="1" stopColor="#646464" /></linearGradient></defs>
        <path d="M1426 733h228v28h-228z" fill="url(#tb)" /><path d="M1654 733h44v28h-44z" fill="#ffa23c" />
        <path d="M1471.500 733v28M1517.500 733v28M1563.500 733v28M1608.500 733v28" stroke="#999" />
        <circle cx="1448" cy="741.500" r="1.600" fill="#fff" /><path d="M1446 745.500h2.500v7M1445.500 752.500h6" stroke="#fff" strokeWidth="1.900" />
        <path d="M1490 738v18M1498 738v18M1485 743h18M1485 751h18" stroke="#fff" strokeWidth="1.700" />
        <text x="1530" y="756.500" fontFamily="DejaVu Serif, serif" fontWeight="bold" fontSize="26" fill="#fff">T</text>
        <path d="M1556 736h6l-3 4zM1601 736h6l-3 4z" fill="#fff" />
        <path d="M1579 741l9 8" stroke="#fff" strokeWidth="2.500" /><path d="M1593 754l-10-2.500 7.500-7.500z" fill="#fff" />
        <path d="M1623.500 738h5v18h-5zM1633.500 738h5v18h-5z" fill="#fff" />
        <circle cx="1676" cy="747" r="8.300" stroke="#fff" strokeWidth="1.600" /><path d="M1672.800 744.500c.5-3 6-3 6 .2 0 2.300-2.700 2.300-2.700 4.600" stroke="#fff" strokeWidth="1.800" /><circle cx="1676" cy="751.700" r="1.200" fill="#fff" />
      </svg>
    </div>
  );
}

const MENU = ["File", "Edit", "View", "Widget", "Options", "Help"];
const MW = ["w-[35px]", "w-[38px]", "w-[43.500px]", "w-[57px]", "w-[61px]", "w-[40px]"];

function OrangeWindow() {
  return (
    <div className="flex h-[762px] w-[1209px] flex-col overflow-hidden rounded-t-[8px] bg-white font-['DejaVu_Sans',sans-serif] shadow-[0_0_14px_rgba(0,0,0,0.6)]">
      <div className="flex h-[37px] shrink-0 items-center border-b border-t border-b-[#1c1a1a] border-t-[#4c4a4a] bg-[#322f30]">
        <svg width="1209" height="35" viewBox="1426 1 1209 35" fill="none">
          <circle cx="2032" cy="17.500" r="2" fill="#fff" />
          <path d="M2545 20.500h8" stroke="#fff" strokeWidth="1.200" /><rect x="2579.500" y="14.500" width="7" height="7" stroke="#fff" strokeWidth="1.200" />
          <circle cx="2617" cy="18" r="9.300" fill="#e95420" /><path d="M2613.500 14.500l7 7M2620.500 14.500l-7 7" stroke="#fff" strokeWidth="1.500" />
        </svg>
      </div>
      <div className="flex h-[20px] shrink-0 items-center border-b border-[#cfcdc9] bg-[#efece8] pl-[10px] text-[12px] leading-[19px] text-black">
        {MENU.map((m, i) => <div key={m} className={MW[i]}><span className="underline underline-offset-[3px]">{m[0]}</span>{m.slice(1)}</div>)}
      </div>
      <div className="flex min-h-0 flex-1">
        <Panel />
        <div className="flex flex-1 flex-col">
          <div className="flex h-[691px]">
            <Workflow />
            <div className="flex w-[14px] flex-col border-l border-[#b5b5b5] bg-[#e3e2df]">
              <div className="flex h-[14px] items-center justify-center border-b border-[#b5b5b5] bg-[#f8f7f5]"><Arrow d="M0 6h8L4 2z" /></div>
              <div className="h-[649px] border-b border-[#b5b5b5] bg-[linear-gradient(to_right,#fff,#efedea)]" />
              <div className="mt-auto flex h-[14px] items-center justify-center border-t border-[#b5b5b5] bg-[#f8f7f5]"><Arrow d="M0 2h8L4 6z" /></div>
            </div>
          </div>
          <div className="flex flex-1 border-t border-[#b5b5b5] bg-[#e3e2df]">
            <div className="flex w-[14px] items-center justify-center border-r border-[#b5b5b5] bg-[#f8f7f5]"><Arrow d="M6 0v8L2 4z" /></div>
            <div className="w-[845px] border-r border-[#b5b5b5] bg-[linear-gradient(#fff,#efedea)]" />
            <div className="ml-auto flex w-[15px] items-center justify-center border-x border-[#b5b5b5] bg-[#f8f7f5]"><Arrow d="M2 0v8l4-4z" /></div>
            <div className="w-[13px] bg-[#eeede8]" />
          </div>
        </div>
      </div>
    </div>
  );
}

export default function App() {
  return (
    <div className="flex h-[768px] w-[2732px] overflow-hidden">
      <div className="flex w-[1366px] flex-col">
        <TopBar />
        <div className="flex min-h-0 flex-1">
          <Dock />
          <div className="flex w-[1306px] flex-col">
            <Tabs />
            <NavBar />
            <PdfBar />
            <PdfPage />
          </div>
        </div>
      </div>
      <div className="flex w-[1366px] bg-[linear-gradient(#b82c22_0px,#a82630_50px,#8c1d48_130px,#7c1655_200px,#640f5e_290px,#5a0a5a_380px,#48044b_500px,#3f0140_610px,#2e0028_700px,#22001b_768px)]">
        <Dock />
        <OrangeWindow />
      </div>
    </div>
  );
}
